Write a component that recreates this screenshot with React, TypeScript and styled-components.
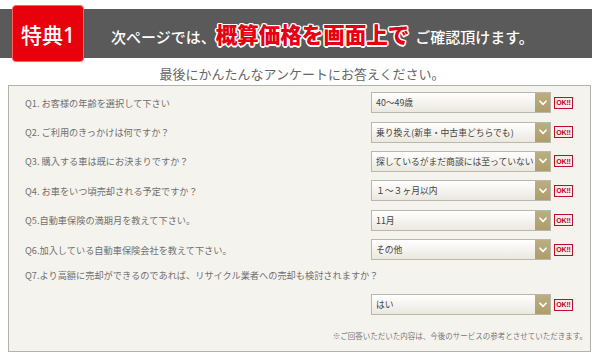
import React from "react";
import styled, { createGlobalStyle } from "styled-components";

const GlobalStyle = createGlobalStyle`
  html, body {
    margin: 0;
    padding: 0;
    background: #ffffff;
  }
  body {
    width: 600px;
    height: 357px;
    overflow: hidden;
    font-family: "Noto Sans CJK JP", "Noto Sans", sans-serif;
  }
`;

const Page = styled.div`
  width: 600px;
  display: flex;
  flex-direction: column;
`;

const HeaderBar = styled.div`
  margin-top: 9px;
  height: 49px;
  width: 592px;
  background: #5a5a5a;
  display: flex;
  align-items: center;
`;

const Badge = styled.div`
  margin-left: 12px;
  width: 72px;
  height: 57px;
  box-sizing: border-box;
  border: 1px solid #ff6060;
  border-radius: 4px;
  background: #e8000d;
  color: #fff;
  font-family: "Noto Sans", "Noto Sans CJK JP", sans-serif;
  font-size: 21px;
  font-weight: 500;
  display: flex;
  align-items: center;
  justify-content: center;
`;

const HeaderText = styled.div`
  margin-left: 27px;
  display: flex;
  align-items: baseline;
  white-space: nowrap;
`;

const WhiteText = styled.span<{ $size: number }>`
  color: #ffffff;
  font-family: "Noto Sans CJK JP", "Noto Sans", sans-serif;
  font-size: ${(p) => p.$size}px;
  font-weight: 500;
`;

const Emphasis = styled.span`
  color: #e60012;
  font-size: 21.5px;
  font-weight: 900;
  margin: 0 6px 0 0;
  text-shadow:
    1.5px 0 0 #fff, -1.5px 0 0 #fff, 0 1.5px 0 #fff, 0 -1.5px 0 #fff,
    1px 1px 0 #fff, -1px -1px 0 #fff, 1px -1px 0 #fff, -1px 1px 0 #fff;
`;

const Lead = styled.p`
  margin: 6px 0 0;
  height: 21px;
  line-height: 20px;
  text-align: center;
  font-size: 13px;
  color: #666;
  padding-left: 4px;
`;

const Panel = styled.div`
  margin: 0 0 0 8px;
  width: 583px;
  box-sizing: border-box;
  border: 1px solid #b4b2ac;
  background: #f5f3ee;
  padding: 2px 0 9px;
  display: flex;
  flex-direction: column;
`;

const Row = styled.div<{ $height: number }>`
  height: ${(p) => p.$height}px;
  display: grid;
  grid-template-columns: 1fr 180px 19px;
  column-gap: 3px;
  align-items: center;
  padding: 0 17px 0 16px;
`;

const QuestionRow = styled.div`
  height: 22px;
  display: flex;
  align-items: center;
  padding: 0 16px;
`;

const Question = styled.span`
  font-size: 9.2px;
  color: #707070;
  white-space: nowrap;
`;

const SelectField = styled.div`
  height: 21px;
  box-sizing: border-box;
  border: 1px solid #bab7ae;
  background: linear-gradient(#ffffff, #ebe8df);
  display: flex;
  align-items: stretch;
`;

const SelectValue = styled.span`
  flex: 1;
  display: flex;
  align-items: center;
  padding-left: 4px;
  font-size: 8.8px;
  color: #444;
  white-space: nowrap;
  overflow: hidden;
`;

const SelectArrow = styled.span`
  width: 15px;
  background: linear-gradient(#bcae80, #ad9d6b);
  display: flex;
  align-items: center;
  justify-content: center;
`;

const OkMark = styled.span`
  width: 19px;
  height: 12px;
  box-sizing: border-box;
  border: 1px solid #b8112c;
  background: #fbeaea;
  color: #c0001c;
  font-family: "Liberation Sans", Arial, sans-serif;
  font-weight: 700;
  font-size: 7px;
  display: flex;
  align-items: center;
  justify-content: center;
  letter-spacing: -0.2px;
`;

const Note = styled.p`
  margin: 7px 3px 0 0;
  text-align: right;
  font-size: 7.5px;
  color: #777;
  line-height: 12px;
`;

const Chevron = () => (
  <svg width="8" height="6" viewBox="0 0 8 6">
    <path d="M1 1.2 L4 4.4 L7 1.2" fill="none" stroke="#fff" strokeWidth="1.6" strokeLinecap="round" strokeLinejoin="round" />
  </svg>
);

const Select = ({ value }: { value: string }) => (
  <SelectField>
    <SelectValue>{value}</SelectValue>
    <SelectArrow>
      <Chevron />
    </SelectArrow>
  </SelectField>
);

const questions = [
  { q: "Q1. お客様の年齢を選択して下さい", a: "40～49歳" },
  { q: "Q2. ご利用のきっかけは何ですか？", a: "乗り換え(新車・中古車どちらでも)" },
  { q: "Q3. 購入する車は既にお決まりですか？", a: "探しているがまだ商談には至っていない" },
  { q: "Q4. お車をいつ頃売却される予定ですか？", a: "１～３ヶ月以内" },
  { q: "Q5.自動車保険の満期月を教えて下さい。", a: "11月" },
  { q: "Q6.加入している自動車保険会社を教えて下さい。", a: "その他" },
];

export default function App() {
  return (
    <>
      <GlobalStyle />
      <Page>
        <HeaderBar>
          <Badge>特典1</Badge>
          <HeaderText>
            <WhiteText $size={15}>次ページでは、</WhiteText>
            <Emphasis>概算価格を画面上で</Emphasis>
            <WhiteText $size={15}>ご確認頂けます。</WhiteText>
          </HeaderText>
        </HeaderBar>
        <Lead>最後にかんたんなアンケートにお答えください。</Lead>
        <Panel>
          {questions.map((item) => (
            <Row key={item.q} $height={29.4}>
              <Question>{item.q}</Question>
              <Select value={item.a} />
              <OkMark>OK!!</OkMark>
            </Row>
          ))}
          <QuestionRow>
            <Question>Q7.より高額に売却ができるのであれば、リサイクル業者への売却も検討されますか？</Question>
          </QuestionRow>
          <Row $height={37}>
            <span />
            <Select value="はい" />
            <OkMark>OK!!</OkMark>
          </Row>
          <Note>※ご回答いただいた内容は、今後のサービスの参考とさせていただきます。</Note>
        </Panel>
      </Page>
    </>
  );
}
